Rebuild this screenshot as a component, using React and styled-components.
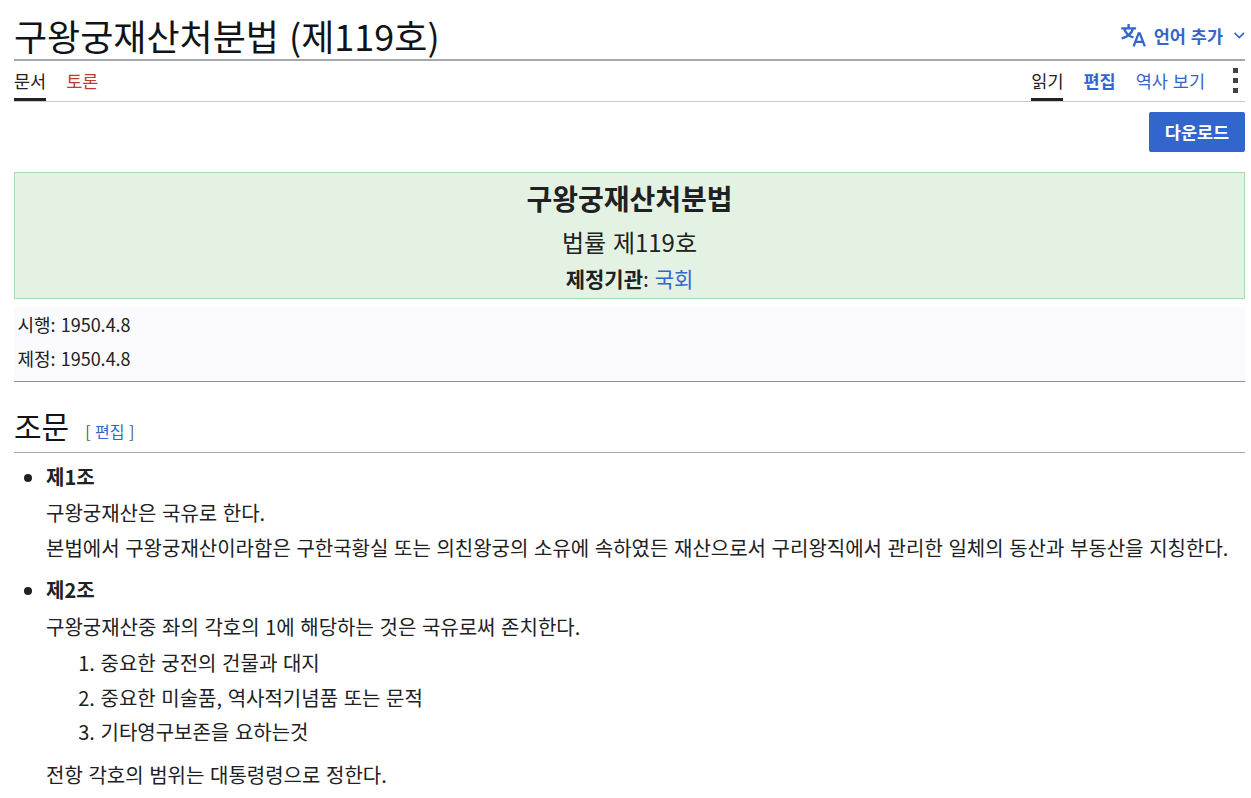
import React from "react";
import styled, { createGlobalStyle } from "styled-components";

const articles = [
  {
    title: "제1조",
    body: [
      "구왕궁재산은 국유로 한다.",
      "본법에서 구왕궁재산이라함은 구한국황실 또는 의친왕궁의 소유에 속하였든 재산으로서 구리왕직에서 관리한 일체의 동산과 부동산을 지칭한다.",
    ],
  },
  {
    title: "제2조",
    body: ["구왕궁재산중 좌의 각호의 1에 해당하는 것은 국유로써 존치한다."],
    items: [
      "중요한 궁전의 건물과 대지",
      "중요한 미술품, 역사적기념품 또는 문적",
      "기타영구보존을 요하는것",
    ],
    footer: "전항 각호의 범위는 대통령령으로 정한다.",
  },
];

function LanguageIcon() {
  return (
    <svg width="25" height="25" viewBox="0 0 25 25" fill="none" stroke="#36c" strokeWidth="2.3">
      <path d="M.3 5.3h14.8M7.6 1v4.3M3.2 5.6c1.3 4.7 5 7.7 9.3 8.9M12 5.6C10.700 10.600 6.500 13.800.7 15.300" />
      <path d="M12.600 23.300l5-13h1.200l5 13M14.300 18.800h7.800" />
    </svg>
  );
}

function App() {
  return (
    <Page>
      <GlobalStyle />
      <Header>
        <Title>구왕궁재산처분법 (제119호)</Title>
        <LanguageBtn>
          <LanguageIcon />
          <span>언어 추가</span>
          <svg width="11" height="7" viewBox="0 0 11 7" fill="none">
            <path d="M.6.9l4.700 4.700L10 .9" stroke="#36c" strokeWidth="1.700" />
          </svg>
        </LanguageBtn>
      </Header>
      <Toolbar>
        <TabGroup>
          <Tab $active>문서</Tab>
          <Tab $color="#bf3c2c">토론</Tab>
        </TabGroup>
        <TabGroup>
          <Tab $active>읽기</Tab>
          <Tab $bold>편집</Tab>
          <Tab>역사 보기</Tab>
          <MoreBtn aria-label="도구">
            <i />
            <i />
            <i />
          </MoreBtn>
        </TabGroup>
      </Toolbar>
      <DownloadRow>
        <DownloadBtn>다운로드</DownloadBtn>
      </DownloadRow>
      <LawBox>
        <LawName>구왕궁재산처분법</LawName>
        <LawNumber>법률 제119호</LawNumber>
        <LawOrgan>
          <b>제정기관</b>: <Anchor>국회</Anchor>
        </LawOrgan>
      </LawBox>
      <Dates>
        <p>시행: 1950.4.8</p>
        <p>제정: 1950.4.8</p>
      </Dates>
      <SectionHeading>
        <h2>조문</h2>
        <EditSection>
          [ <Anchor>편집</Anchor> ]
        </EditSection>
      </SectionHeading>
      <ArticleList>
        {articles.map((article) => (
          <Article key={article.title}>
            <ArticleTitle>{article.title}</ArticleTitle>
            {article.body.map((text) => (
              <Line key={text}>{text}</Line>
            ))}
            {article.items && (
              <ItemList>
                {article.items.map((item) => (
                  <li key={item}>{item}</li>
                ))}
              </ItemList>
            )}
            {article.footer && <Line>{article.footer}</Line>}
          </Article>
        ))}
      </ArticleList>
    </Page>
  );
}

export default App;

const GlobalStyle = createGlobalStyle`
  * {
    box-sizing: border-box;
    word-spacing: 0.056em;
  }
  body {
    margin: 0;
    background-color: #fff;
    overflow: hidden;
  }
  h1, h2, p, ul, ol {
    margin: 0;
    padding: 0;
    font-weight: normal;
  }
`;

const Page = styled.div`
  padding: 0 6px 0 14px;
  height: 798px;
  overflow: hidden;
  color: #202122;
  font-family: "Noto Sans CJK KR", sans-serif;
  font-size: 20px;
`;
const Header = styled.header`
  display: flex;
  justify-content: space-between;
  height: 61px;
  padding-top: 10px;
  border-bottom: 2px solid #a2a9b1;
`;
const Title = styled.h1`
  color: #101418;
  font-size: 36px;
  line-height: 50px;
`;
const LanguageBtn = styled.div`
  display: flex;
  align-items: center;
  height: 50px;
  color: #36c;
  font-size: 17.5px;
  font-weight: bold;

  span {
    margin: 0 11px 0 8px;
  }
`;
const Toolbar = styled.nav`
  display: flex;
  justify-content: space-between;
  height: 41px;
  border-bottom: 1px solid #c8ccd1;
`;
const TabGroup = styled.div`
  display: flex;
  gap: 20px;
`;
const Tab = styled.a`
  height: 40px;
  border-bottom: 3px solid ${(props) => (props.$active ? "#202122" : "transparent")};
  color: ${(props) => (props.$active ? "#202122" : props.$color || "#36c")};
  font-size: 17.5px;
  font-weight: ${(props) => (props.$bold ? "bold" : "normal")};
  line-height: 39px;
`;
const MoreBtn = styled.div`
  display: flex;
  flex-direction: column;
  gap: 5px;
  width: 20px;
  padding: 7px 0 0 8px;

  i {
    width: 5px;
    height: 5px;
    background-color: #404244;
  }
`;
const DownloadRow = styled.div`
  display: flex;
  justify-content: flex-end;
  padding: 10px 0 20px;
`;
const DownloadBtn = styled.div`
  width: 96px;
  height: 40px;
  border-radius: 2px;
  background-color: #36c;
  color: #fff;
  font-size: 17.5px;
  font-weight: bold;
  line-height: 39px;
  text-align: center;
`;
const LawBox = styled.div`
  height: 127px;
  border: 1px solid #aaddaa;
  background-color: #e4f2e4;
  text-align: center;
`;
const LawName = styled.div`
  font-size: 28px;
  font-weight: bold;
  line-height: 50px;
`;
const LawNumber = styled.div`
  font-size: 24px;
  line-height: 37px;
`;
const LawOrgan = styled.div`
  font-size: 21px;
  line-height: 36px;
`;
const Anchor = styled.a`
  color: #36c;
`;
const Dates = styled.div`
  height: 75px;
  margin-top: 8px;
  padding: 0 3.5px;
  border-bottom: 1px solid #a08c91;
  background-color: #fafaff;
  font-size: 18px;
  line-height: 34px;
`;
const SectionHeading = styled.div`
  display: flex;
  align-items: baseline;
  height: 71px;
  padding-top: 22px;
  border-bottom: 1px solid #a2a9b1;

  h2 {
    color: #101418;
    font-size: 30px;
    line-height: 42px;
  }
`;
const EditSection = styled.span`
  margin-left: 16px;
  color: #54595d;
  font-size: 16px;
`;
const ArticleList = styled.ul`
  padding-left: 32px;
  list-style: disc;
`;
const Article = styled.li`
  padding-top: 6px;

  & + & {
    padding-top: 7px;
  }
`;
const ArticleTitle = styled.div`
  font-weight: bold;
  line-height: 36px;

  li + li > & {
    padding-bottom: 1px;
  }
`;
const Line = styled.p`
  line-height: 35px;
`;
const ItemList = styled.ol`
  margin: 2px 0 7px;
  padding-left: 54.5px;
  line-height: 34.6px;
`;
